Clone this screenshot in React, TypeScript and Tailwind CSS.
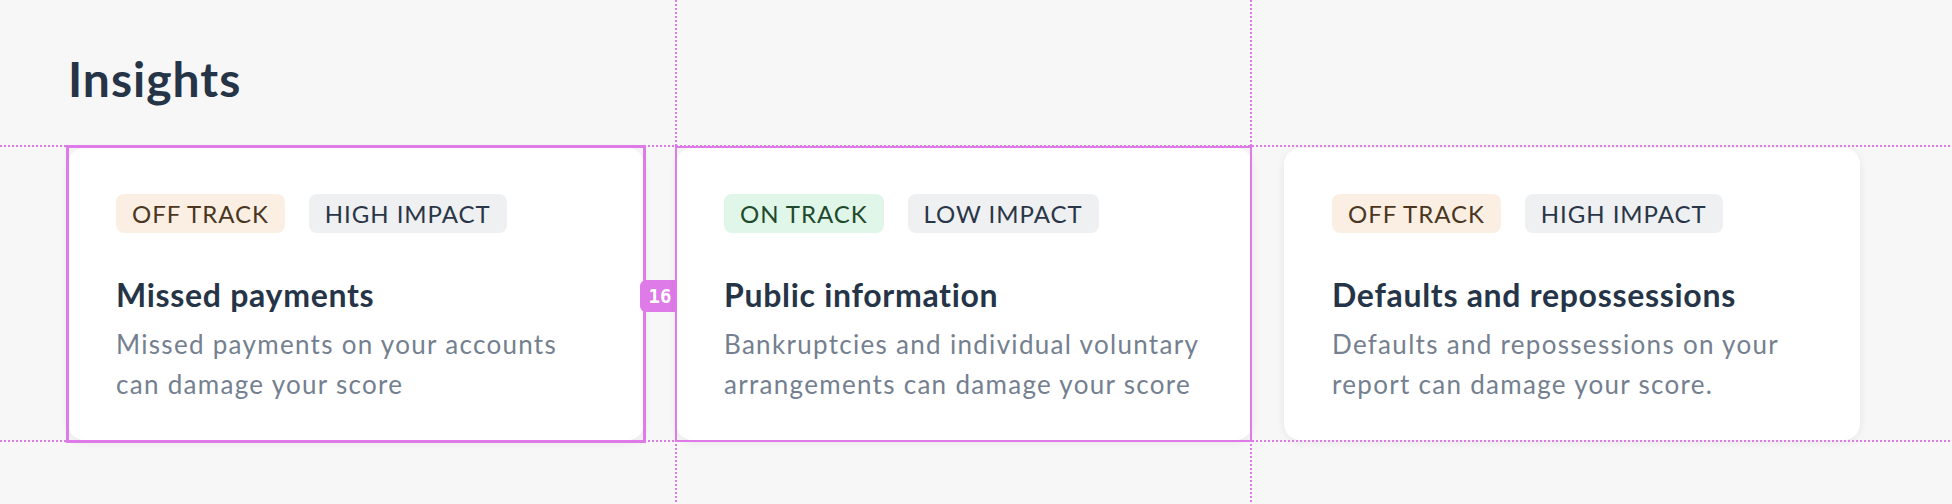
const cards = [
  {
    status: "OFF TRACK",
    onTrack: false,
    impact: "HIGH IMPACT",
    title: "Missed payments",
    lines: ["Missed payments on your accounts", "can damage your score"],
    mark: "selected",
  },
  {
    status: "ON TRACK",
    onTrack: true,
    impact: "LOW IMPACT",
    title: "Public information",
    lines: ["Bankruptcies and individual voluntary", "arrangements can damage your score"],
    mark: "hover",
  },
  {
    status: "OFF TRACK",
    onTrack: false,
    impact: "HIGH IMPACT",
    title: "Defaults and repossessions",
    lines: ["Defaults and repossessions on your", "report can damage your score."],
    mark: "",
  },
];

const dotsX = "bg-[repeating-linear-gradient(90deg,#df7be8_0_2px,transparent_2px_4px)]";
const dotsY = "bg-[repeating-linear-gradient(180deg,#df7be8_0_2px,transparent_2px_4px)]";

function Badge({ label, className }: { label: string; className: string }) {
  return (
    <span
      className={`flex h-[39px] items-center rounded-lg px-4 text-[24px] leading-none tracking-[0.04em] ${className}`}
    >
      {label}
    </span>
  );
}

export default function App() {
  return (
    <div className="relative h-[504px] w-full overflow-hidden bg-[#f7f7f7] pl-[68px] pt-[51px] font-['Lato','Noto_Sans',sans-serif]">
      <h1 className="text-[48px] font-bold leading-[56px] tracking-[1px] text-[#253447]">Insights</h1>

      <div className="mt-[41px] flex gap-8">
        {cards.map((c) => (
          <div
            key={c.title}
            className="relative h-[292px] w-[576px] rounded-2xl bg-white pl-12 pt-[46px] shadow-[0_2px_10px_rgba(0,0,0,0.07)]"
          >
            <div className="flex gap-6">
              <Badge
                label={c.status}
                className={c.onTrack ? "bg-[#e0f6e8] text-[#1f4a2d]" : "bg-[#fbefe4] text-[#4a3621]"}
              />
              <Badge label={c.impact} className="bg-[#eef0f2] text-[#2a3647]" />
            </div>
            <h3 className="mt-[42px] text-[32px] font-bold leading-[40px] tracking-[0.7px] text-[#253447]">
              {c.title}
            </h3>
            <p className="mt-[9px] text-[26px] leading-[40px] tracking-[1.3px] text-[#74808f]">
              {c.lines.map((l) => (
                <span key={l} className="block whitespace-nowrap">
                  {l}
                </span>
              ))}
            </p>

            {c.mark === "selected" && (
              <div className="absolute -inset-x-[2px] -top-[3px] -bottom-[3px] border-[3px] border-[#df7be8]">
                <div className="absolute -right-[37px] top-[132px] flex h-[32px] w-[40px] items-center justify-center rounded-md bg-[#df7be8] font-['DejaVu_Sans_Mono',monospace] text-[19px] font-bold text-white">
                  16
                </div>
              </div>
            )}
            {c.mark === "hover" && (
              <div className="absolute -left-[1px] -top-[2px] -bottom-[2px] right-0 border-2 border-[#df7be8]" />
            )}
          </div>
        ))}
      </div>

      {/* design tool guides */}
      <div className={`absolute inset-x-0 top-[145px] h-[2px] ${dotsX}`} />
      <div className={`absolute inset-x-0 top-[440px] h-[2px] ${dotsX}`} />
      <div className={`absolute inset-y-0 left-[675px] w-[2px] ${dotsY}`} />
      <div className={`absolute inset-y-0 left-[1250px] w-[2px] ${dotsY}`} />
    </div>
  );
}
